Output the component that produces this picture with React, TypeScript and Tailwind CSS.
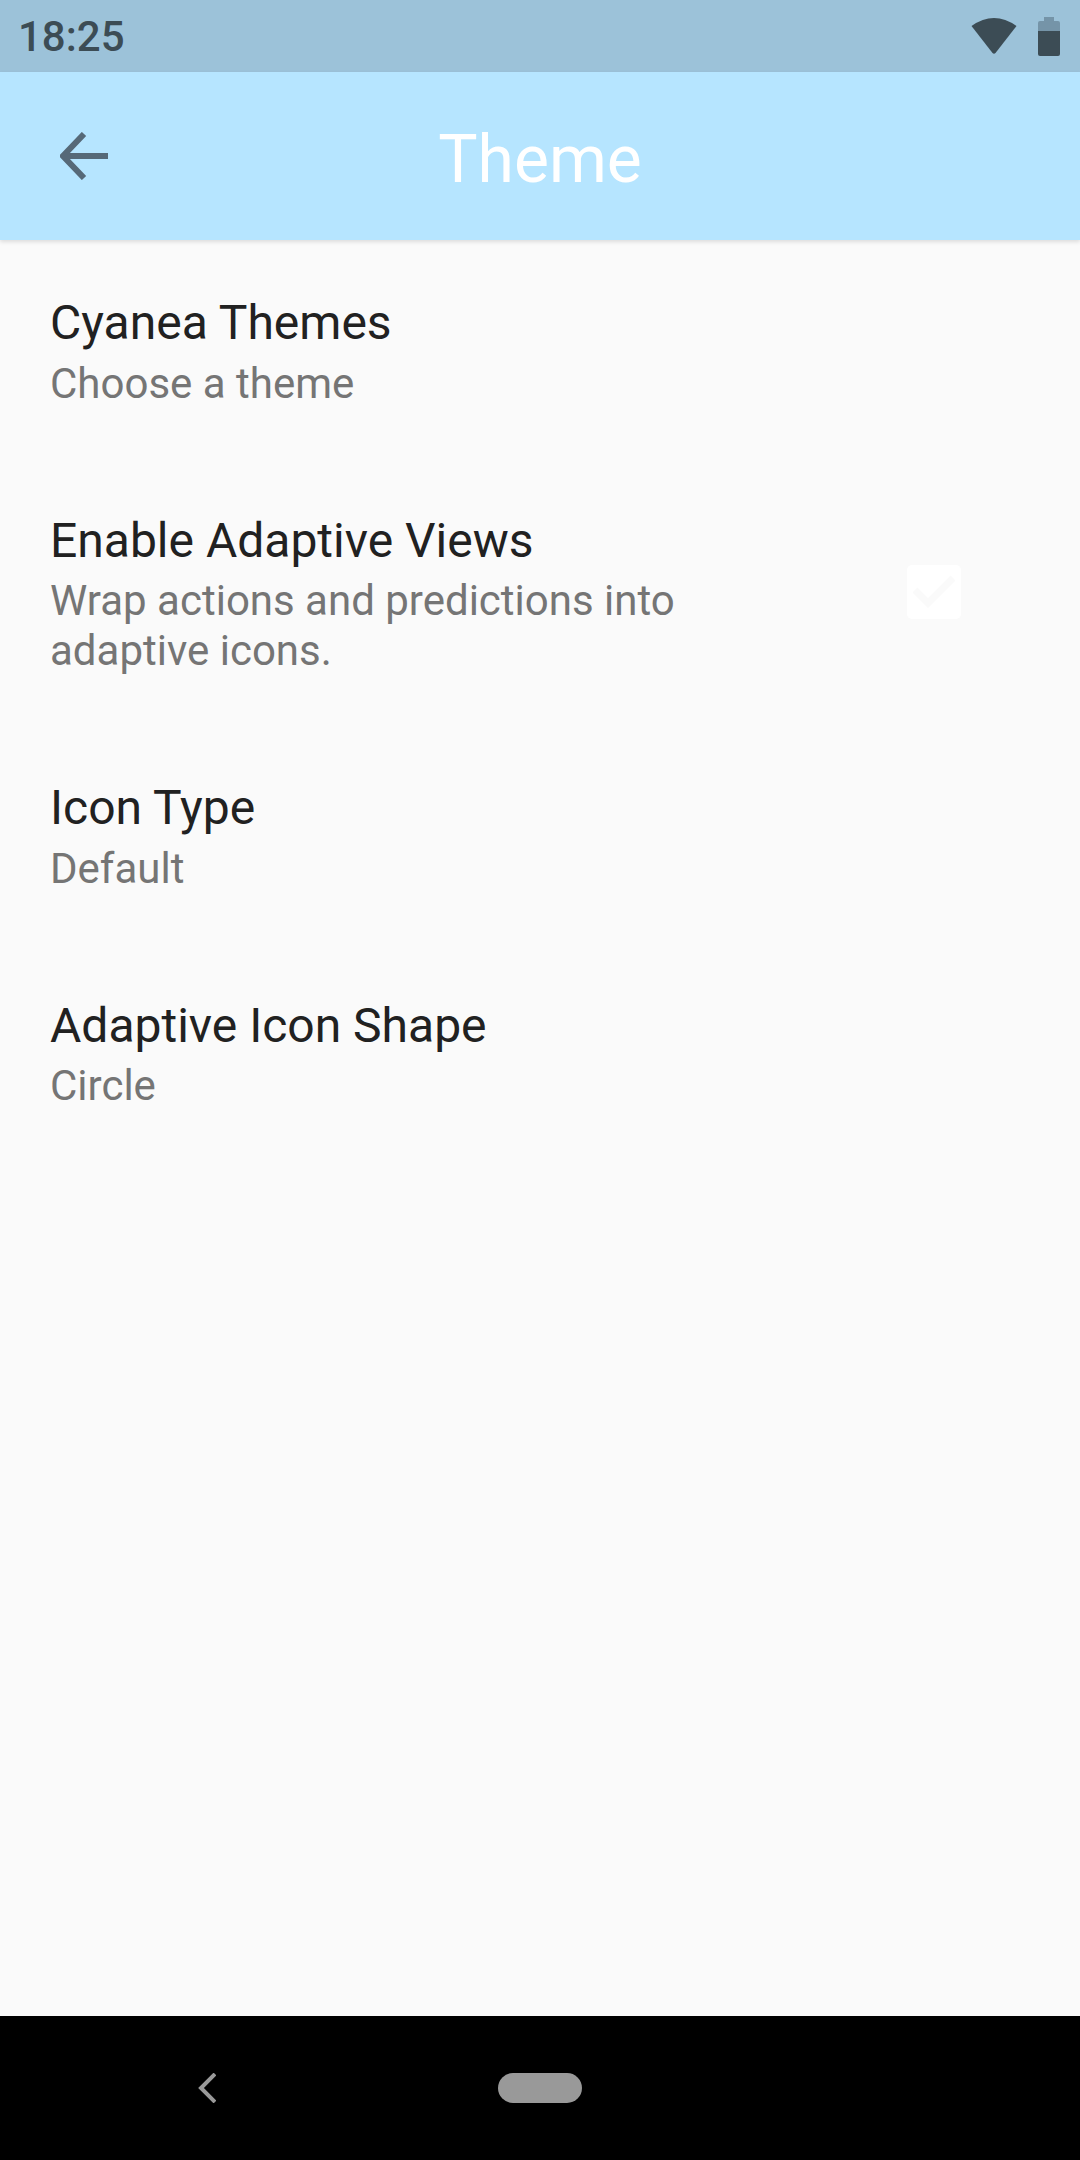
import React from 'react';

const prefs = [
  { title: 'Cyanea Themes', summary: ['Choose a theme'] },
  { title: 'Enable Adaptive Views', summary: ['Wrap actions and predictions into', 'adaptive icons.'], checked: true },
  { title: 'Icon Type', summary: ['Default'] },
  { title: 'Adaptive Icon Shape', summary: ['Circle'] },
];

const PrefRow: React.FC<{ title: string; summary: string[]; checked?: boolean }> = ({ title, summary, checked }) => (
  <div className="flex items-center justify-between pl-[50px] pr-[119px] pt-[55.2px] pb-[49.5px]">
    <div>
      <p className="text-[48px] leading-[56px] mb-[7.5px] text-[#212121]">{title}</p>
      {summary.map((line) => (
        <p key={line} className="text-[42px] leading-[49.5px] text-[#757575]">
          {line}
        </p>
      ))}
    </div>
    {checked && (
      <div className="w-[54px] h-[54px] mb-[5px] rounded-[5px] bg-white flex items-center justify-center">
        <svg width="42" height="34" viewBox="0 0 42 34" fill="none">
          <path d="M2 15 L15 28 L40 3" stroke="#fafafa" strokeWidth="7" />
        </svg>
      </div>
    )}
  </div>
);

export default function App() {
  return (
    <div className="w-[1080px] h-[2160px] flex flex-col bg-[#fafafa] font-['Roboto',sans-serif]">
      <div className="h-[72px] bg-[#9cc2d9] flex items-center justify-between pl-[18px] pr-[20px]">
        <span className="text-[42px] font-medium text-[#3c4c55]">18:25</span>
        <div className="flex items-center gap-[21px]">
          <svg width="46" height="36" viewBox="0 0 46 36">
            <path d="M0.5 8 Q23 -8 45.5 8 L24.5 35 Q23 36.5 21.5 35 Z" fill="#3c4c55" />
          </svg>
          <svg width="22" height="39" viewBox="0 0 22 39">
            <path d="M6 0 H16 V4 H20 Q22 4 22 6 V14 H0 V6 Q0 4 2 4 H6 Z" fill="#7594a8" />
            <path d="M0 14 H22 V37 Q22 39 20 39 H2 Q0 39 0 37 Z" fill="#3c4c55" />
          </svg>
        </div>
      </div>

      <div className="h-[168px] bg-[#b6e5ff] shadow-[0_2px_4px_rgba(0,0,0,0.12)] flex items-center relative">
        <svg className="absolute left-[60px] top-[60px]" width="48" height="48" viewBox="0 0 48 48" fill="none">
          <path d="M48 24 H3 M24 2 L3 24 L24 46" stroke="#566978" strokeWidth="6" />
        </svg>
        <h1 className="w-full text-center text-[66px] leading-[84px] mt-[7px] text-white">Theme</h1>
      </div>

      <div className="flex-1 flex flex-col">
        {prefs.map((p) => (
          <PrefRow key={p.title} {...p} />
        ))}
      </div>

      <div className="h-[144px] bg-black flex items-center pl-[198px]">
        <svg width="18" height="30" viewBox="0 0 18 30" fill="none">
          <path d="M17 1 L3 15 L17 29" stroke="#999999" strokeWidth="4" />
        </svg>
        <div className="ml-[282px] w-[84px] h-[30px] rounded-full bg-[#999999]" />
      </div>
    </div>
  );
}
